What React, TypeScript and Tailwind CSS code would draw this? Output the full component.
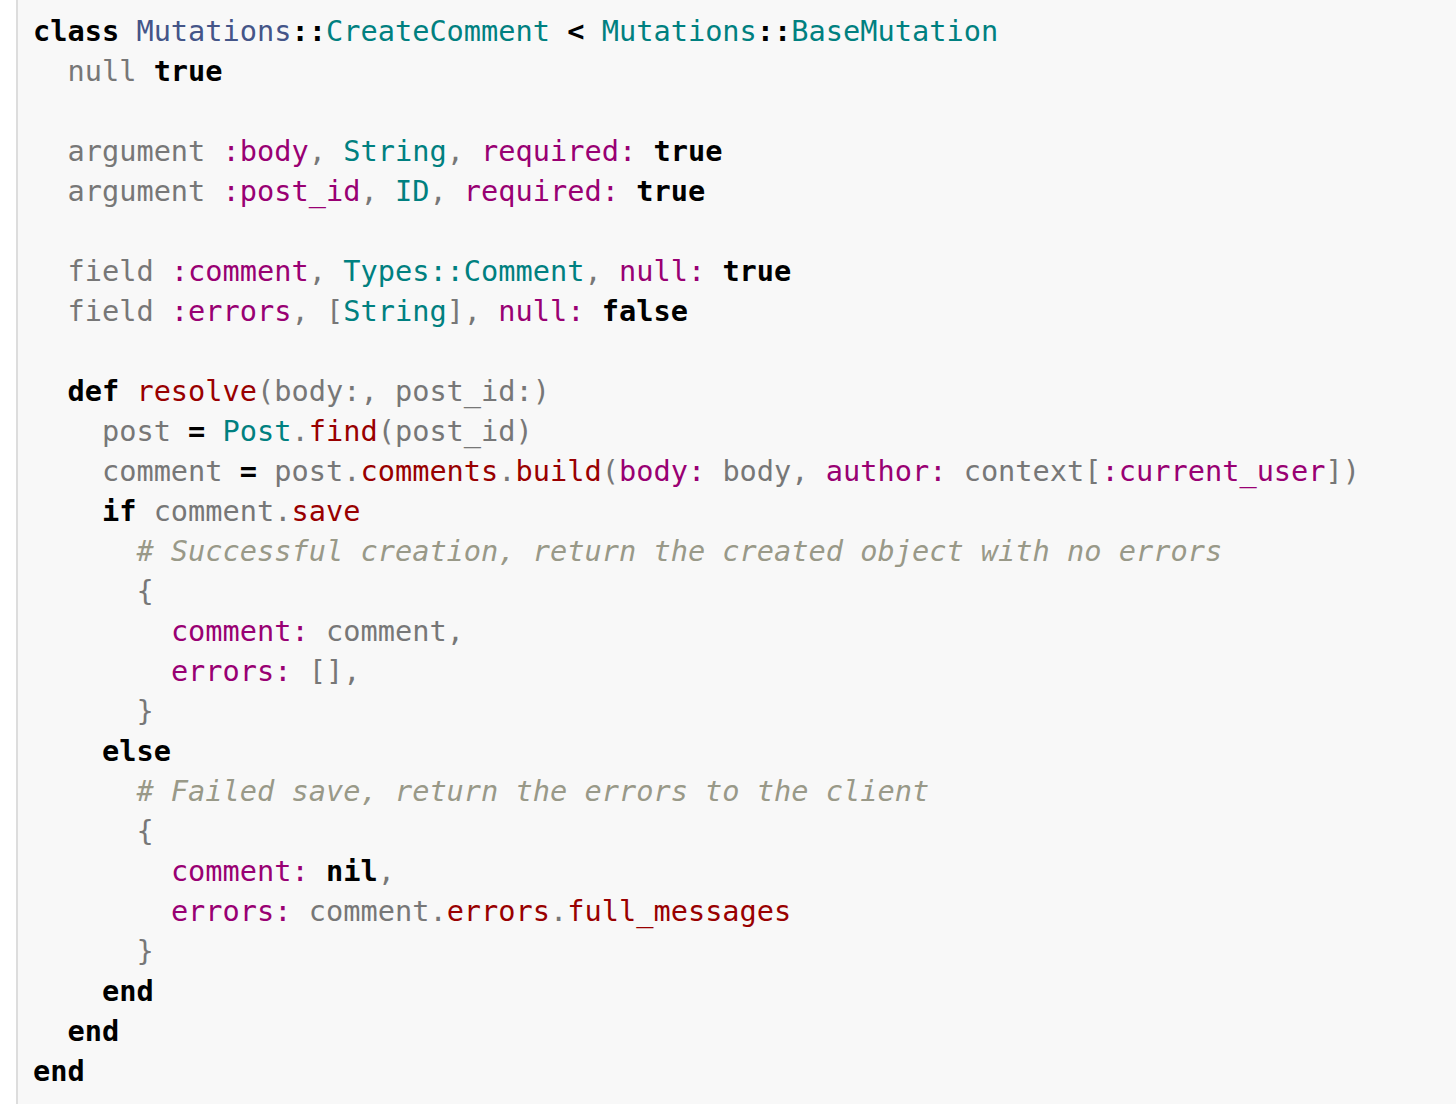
import React from "react";

type Tok = [string, string];

const cls: Record<string, string> = {
  k: "text-black font-bold",
  o: "text-black font-bold",
  c: "text-[#445588]",
  t: "text-[#008080]",
  s: "text-[#990073]",
  i: "text-[#777777]",
  p: "text-[#777777]",
  m: "text-[#990000]",
  cm: "text-[#999988] italic",
  w: "",
};

const lines: Tok[][] = [
  [["k", "class"], ["w", " "], ["c", "Mutations"], ["o", "::"], ["t", "CreateComment"], ["w", " "], ["o", "<"], ["w", " "], ["t", "Mutations"], ["o", "::"], ["t", "BaseMutation"]],
  [["w", "  "], ["i", "null"], ["w", " "], ["k", "true"]],
  [],
  [["w", "  "], ["i", "argument"], ["w", " "], ["s", ":body"], ["p", ","], ["w", " "], ["t", "String"], ["p", ","], ["w", " "], ["s", "required:"], ["w", " "], ["k", "true"]],
  [["w", "  "], ["i", "argument"], ["w", " "], ["s", ":post_id"], ["p", ","], ["w", " "], ["t", "ID"], ["p", ","], ["w", " "], ["s", "required:"], ["w", " "], ["k", "true"]],
  [],
  [["w", "  "], ["i", "field"], ["w", " "], ["s", ":comment"], ["p", ","], ["w", " "], ["t", "Types::Comment"], ["p", ","], ["w", " "], ["s", "null:"], ["w", " "], ["k", "true"]],
  [["w", "  "], ["i", "field"], ["w", " "], ["s", ":errors"], ["p", ","], ["w", " "], ["p", "["], ["t", "String"], ["p", "]"], ["p", ","], ["w", " "], ["s", "null:"], ["w", " "], ["k", "false"]],
  [],
  [["w", "  "], ["k", "def"], ["w", " "], ["m", "resolve"], ["p", "(body:, post_id:)"]],
  [["w", "    "], ["i", "post"], ["w", " "], ["o", "="], ["w", " "], ["t", "Post"], ["p", "."], ["m", "find"], ["p", "(post_id)"]],
  [["w", "    "], ["i", "comment"], ["w", " "], ["o", "="], ["w", " "], ["i", "post"], ["p", "."], ["m", "comments"], ["p", "."], ["m", "build"], ["p", "("], ["s", "body:"], ["w", " "], ["i", "body"], ["p", ","], ["w", " "], ["s", "author:"], ["w", " "], ["i", "context"], ["p", "["], ["s", ":current_user"], ["p", "])"]],
  [["w", "    "], ["k", "if"], ["w", " "], ["i", "comment"], ["p", "."], ["m", "save"]],
  [["w", "      "], ["cm", "# Successful creation, return the created object with no errors"]],
  [["w", "      "], ["p", "{"]],
  [["w", "        "], ["s", "comment:"], ["w", " "], ["i", "comment"], ["p", ","]],
  [["w", "        "], ["s", "errors:"], ["w", " "], ["p", "[]"], ["p", ","]],
  [["w", "      "], ["p", "}"]],
  [["w", "    "], ["k", "else"]],
  [["w", "      "], ["cm", "# Failed save, return the errors to the client"]],
  [["w", "      "], ["p", "{"]],
  [["w", "        "], ["s", "comment:"], ["w", " "], ["k", "nil"], ["p", ","]],
  [["w", "        "], ["s", "errors:"], ["w", " "], ["i", "comment"], ["p", "."], ["m", "errors"], ["p", "."], ["m", "full_messages"]],
  [["w", "      "], ["p", "}"]],
  [["w", "    "], ["k", "end"]],
  [["w", "  "], ["k", "end"]],
  [["k", "end"]],
];

export default function App() {
  return (
    <div className="w-[1456px] h-[1104px] bg-white flex overflow-hidden">
      <div className="ml-[16px] flex-1 border-l-2 border-[#dddddd] bg-[#f8f8f8] pl-[15px] pt-[11px] font-['DejaVu_Sans_Mono',monospace] text-[28.64px] leading-[40px]">
        {lines.map((line, idx) => (
          <div key={idx} className="h-[40px] whitespace-pre">
            {line.length === 0
              ? " "
              : line.map(([t, txt], j) => (
                  <span key={j} className={cls[t]}>
                    {txt}
                  </span>
                ))}
          </div>
        ))}
      </div>
    </div>
  );
}
